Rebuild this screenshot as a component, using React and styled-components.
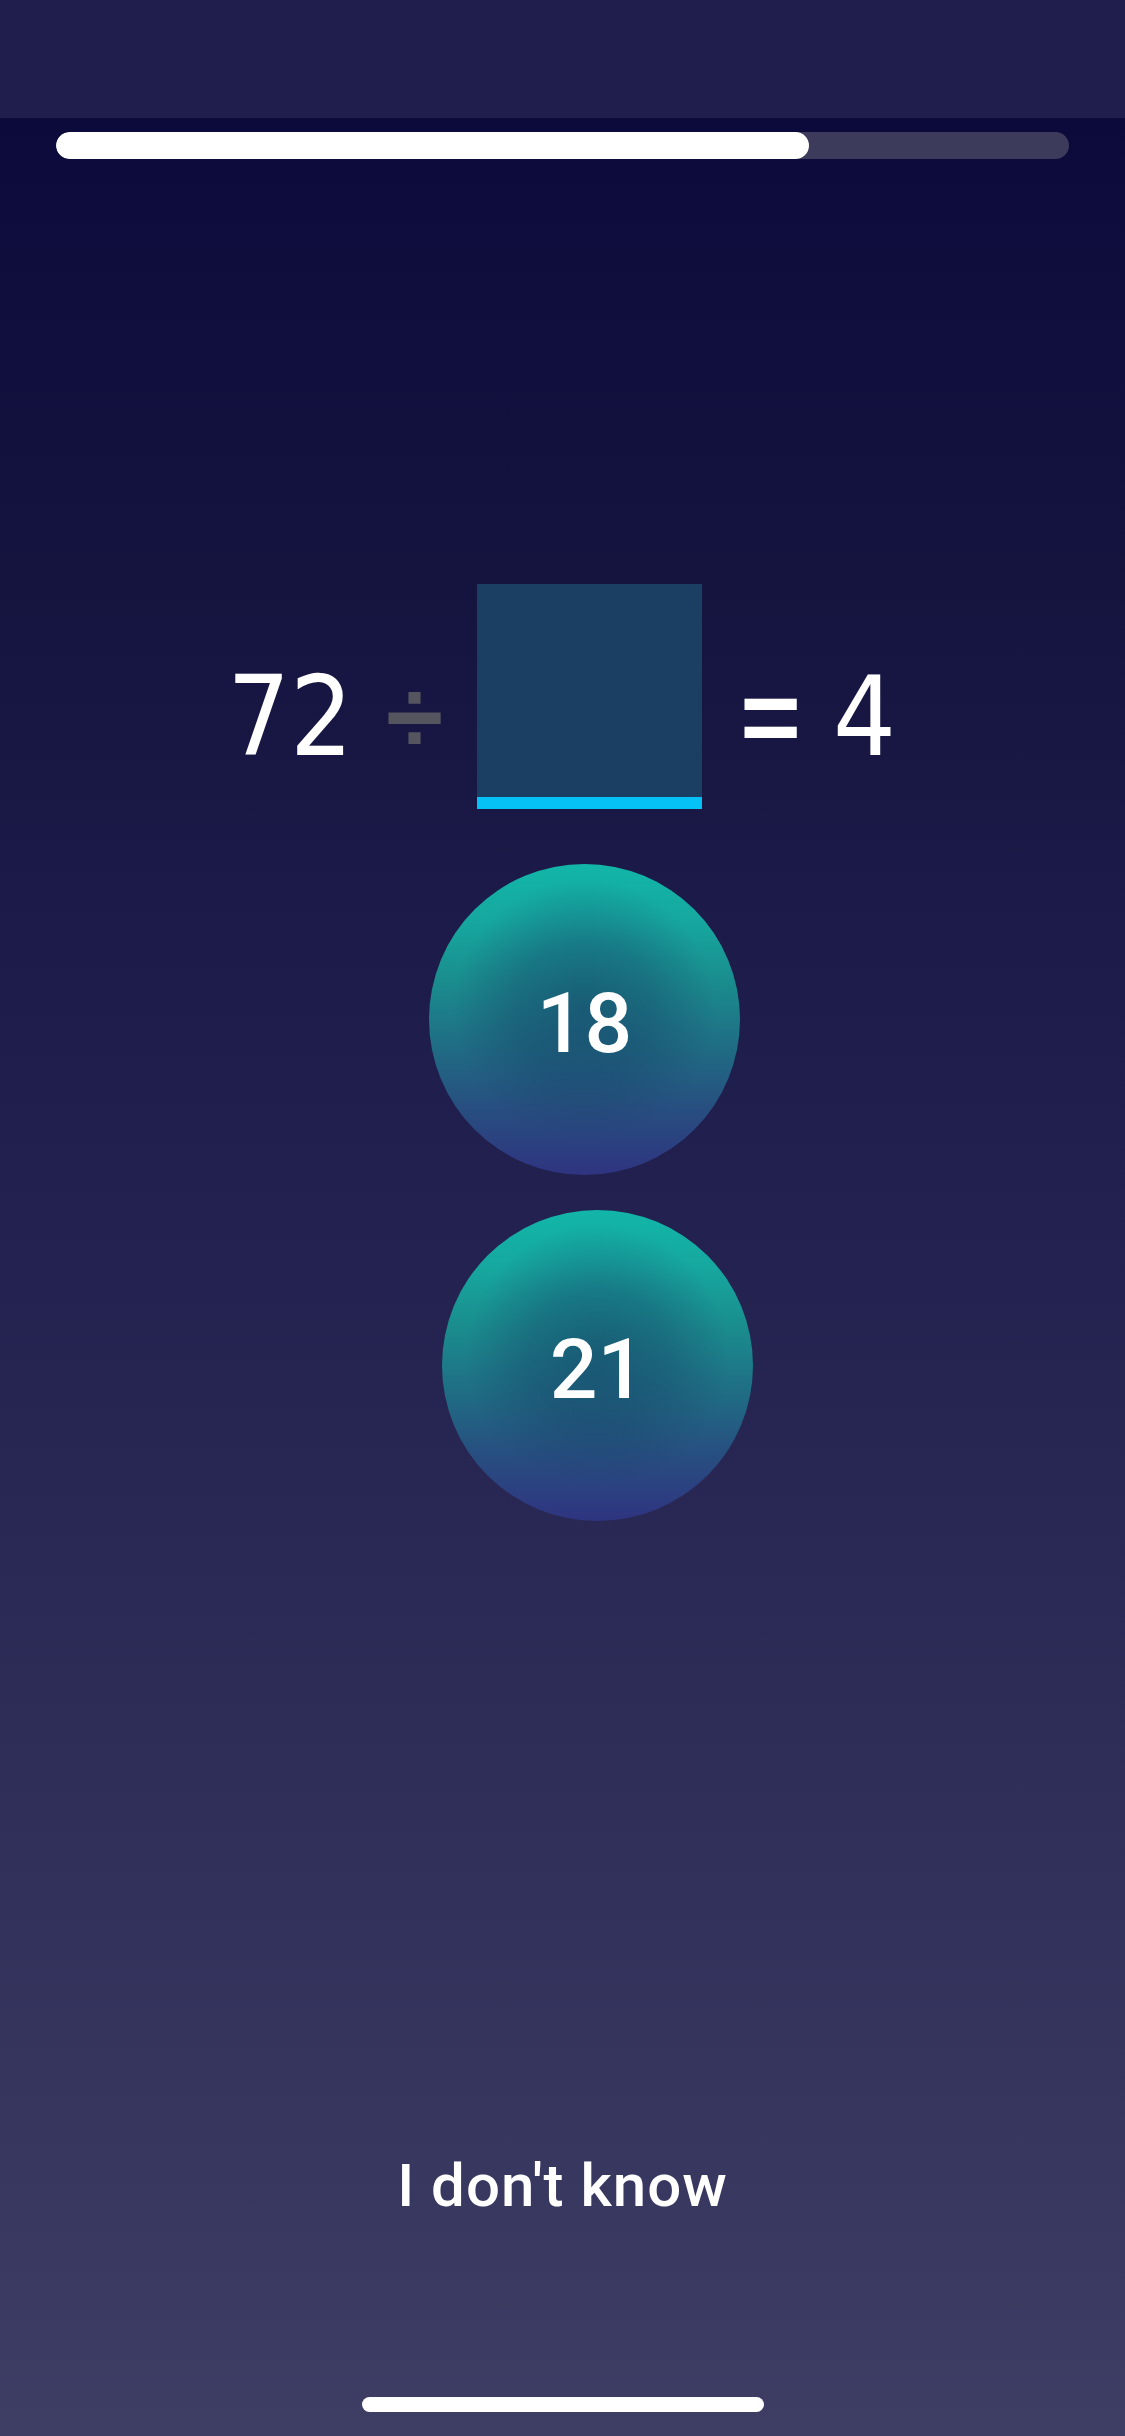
import React from "react";
import styled, { createGlobalStyle } from "styled-components";

const Global = createGlobalStyle`
  html, body { margin: 0; padding: 0; }
  body { background: #0b0a3b; }
  * { box-sizing: border-box; }
`;

const FONT = `"DejaVu Sans", "Liberation Sans", sans-serif`;
const UI_FONT = `Roboto, "Liberation Sans", sans-serif`;

const Screen = styled.div`
  width: 1125px;
  height: 2436px;
  display: flex;
  flex-direction: column;
  overflow: hidden;
  font-family: ${FONT};
  font-stretch: condensed;
  color: #ffffff;
`;

const TopBar = styled.div`
  height: 118px;
  flex: 0 0 118px;
  background: #1f1e4d;
`;

const Body = styled.main`
  flex: 1;
  display: flex;
  flex-direction: column;
  align-items: center;
  background: linear-gradient(180deg, #0b0a3b 0%, #15143f 20%, #1d1c4b 38%, #262552 55%, #31305a 75%, #3e3d64 100%);
`;

const Track = styled.div`
  margin-top: 14px;
  width: 1013px;
  height: 27px;
  border-radius: 14px;
  background: #3c3b5b;
  overflow: hidden;
`;

const Fill = styled.div`
  height: 100%;
  border-radius: 14px;
  background: #ffffff;
`;

const Equation = styled.div`
  margin-top: 425px;
  padding-right: 2px;
  display: flex;
  align-items: flex-end;
  justify-content: center;
  gap: 36px;
`;

const Term = styled.span`
  font-size: 110px;
  line-height: 1;
  margin-bottom: 37px;
  color: #ffffff;
`;

const Operator = styled.span`
  font-family: "Liberation Sans", sans-serif;
  font-stretch: normal;
  font-weight: 700;
  font-size: 104px;
  line-height: 1;
  margin-bottom: ${(p) => p.$mb}px;
  margin-left: ${(p) => p.$ml || 0}px;
  margin-right: ${(p) => p.$mr || 0}px;
  color: ${(p) => (p.$muted ? "#55555f" : "#ffffff")};
`;

const AnswerSlot = styled.div`
  width: 225px;
  height: 225px;
  background: #1a3f62;
  border-bottom: 12px solid #05c1f5;
`;

const Choices = styled.div`
  margin-top: 55px;
  display: flex;
  flex-direction: column;
  align-items: center;
  gap: 35px;
`;

const Bubble = styled.button`
  width: 311px;
  height: 311px;
  border-radius: 50%;
  border: none;
  padding: 8px 0 0;
  display: flex;
  align-items: center;
  justify-content: center;
  color: #ffffff;
  font-family: ${UI_FONT};
  font-weight: 500;
  font-size: 84px;
  line-height: 1;
  transform: translateX(${(p) => p.$shift}px);
  background:
    radial-gradient(circle at 50% 47%, rgba(22, 60, 100, 0.55) 0%, rgba(22, 60, 100, 0.35) 30%, rgba(22, 60, 100, 0) 58%),
    linear-gradient(180deg, #12b6a8 0%, #16a8a0 18%, #1a8c8e 38%, #1f6e84 58%, #274f80 78%, #2f3480 100%);
`;

const Spacer = styled.div`
  flex: 1;
`;

const Skip = styled.div`
  font-family: ${UI_FONT};
  font-stretch: normal;
  font-weight: 500;
  font-size: 60px;
  line-height: 1;
  letter-spacing: 1px;
  margin-bottom: 181px;
`;

const HomeIndicator = styled.div`
  width: 402px;
  height: 15px;
  border-radius: 8px;
  background: #ffffff;
  margin-bottom: 24px;
`;

export default function App() {
  const progress = 74.33;
  return (
    <>
      <Global />
      <Screen>
        <TopBar />
        <Body>
          <Track>
            <Fill style={{ width: `${progress}%` }} />
          </Track>
          <Equation>
            <Term>72</Term>
            <Operator $muted $mb={40} $ml={-3} $mr={-2}>÷</Operator>
            <AnswerSlot />
            <Operator $mb={40} $ml={2} $mr={-4}>=</Operator>
            <Term>4</Term>
          </Equation>
          <Choices>
            <Bubble $shift={22}>18</Bubble>
            <Bubble $shift={35}>21</Bubble>
          </Choices>
          <Spacer />
          <Skip>I don't know</Skip>
          <HomeIndicator />
        </Body>
      </Screen>
    </>
  );
}
